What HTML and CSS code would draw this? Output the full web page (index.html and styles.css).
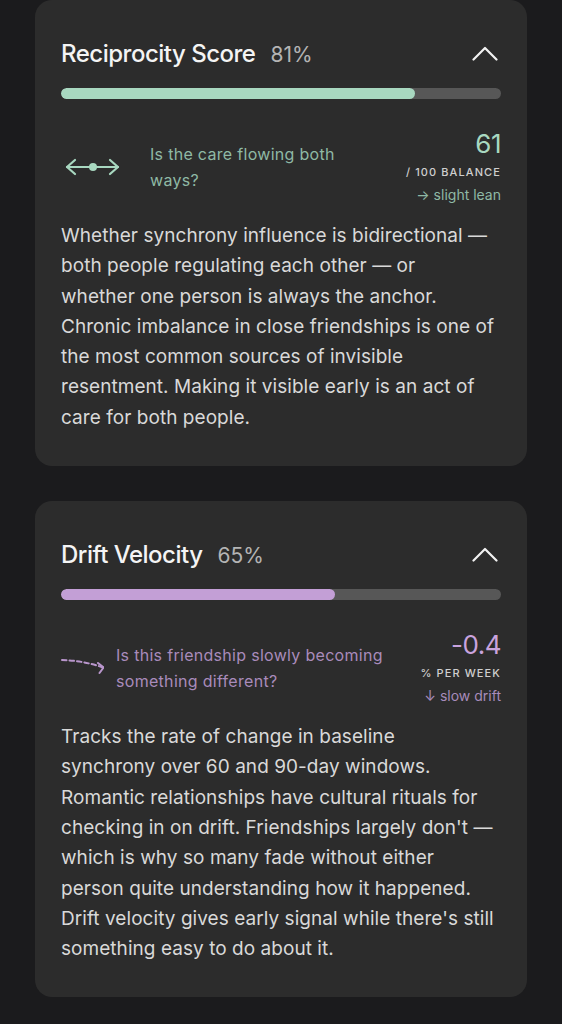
FILE: index.html
```html
<!DOCTYPE html>
<html lang="en">
<head>
<meta charset="utf-8">
<title>Metrics</title>
<link rel="stylesheet" href="styles.css">
</head>
<body>
<main class="stack">
  <section class="card card-mint">
    <header class="card-head">
      <div class="head-title">
        <h2 class="title">Reciprocity Score</h2>
        <span class="pct">81%</span>
      </div>
      <svg class="chevron" width="26" height="15" viewBox="0 0 26 15"><path d="M1.5 13.5 L13 2 L24.5 13.5" fill="none" stroke="#f2f2f2" stroke-width="2.2" stroke-linecap="round" stroke-linejoin="round"/></svg>
    </header>
    <div class="bar"><div class="fill" style="width:80.5%"></div></div>
    <div class="row">
      <div class="q">
        <svg class="icon icon-a" width="77" height="20" viewBox="0 0 77 20">
          <g fill="none" stroke="#a8d8c0" stroke-width="2.2" stroke-linecap="round" stroke-linejoin="round">
            <path d="M6 10 H57"/>
            <path d="M14 3 L6 10 L14 17"/>
            <path d="M49 3 L57 10 L49 17"/>
          </g>
          <circle cx="32" cy="10" r="4" fill="#a8d8c0"/>
        </svg>
        <p class="q-text">Is the care flowing both<br>ways?</p>
      </div>
      <div class="val">
        <div class="num">61</div>
        <div class="unit">/ 100 BALANCE</div>
        <div class="note">→ slight lean</div>
      </div>
    </div>
    <p class="body">Whether synchrony influence is bidirectional —<br>both people regulating each other — or<br>whether one person is always the anchor.<br>Chronic imbalance in close friendships is one of<br>the most common sources of invisible<br>resentment. Making it visible early is an act of<br>care for both people.</p>
  </section>

  <section class="card card-purple">
    <header class="card-head">
      <div class="head-title">
        <h2 class="title">Drift Velocity</h2>
        <span class="pct">65%</span>
      </div>
      <svg class="chevron" width="26" height="15" viewBox="0 0 26 15"><path d="M1.5 13.5 L13 2 L24.5 13.5" fill="none" stroke="#f2f2f2" stroke-width="2.2" stroke-linecap="round" stroke-linejoin="round"/></svg>
    </header>
    <div class="bar"><div class="fill" style="width:62.3%"></div></div>
    <div class="row">
      <div class="q">
        <svg class="icon icon-b" width="43" height="20" viewBox="0 0 43 20">
          <g fill="none" stroke="#b996cc" stroke-width="2" stroke-linecap="round" stroke-linejoin="round">
            <path d="M1 4 Q 22 4.5 42 11.5" stroke-dasharray="4.5 3"/>
            <path d="M37 7 L42.5 11.5 L38.5 17"/>
          </g>
        </svg>
        <p class="q-text">Is this friendship slowly becoming<br>something different?</p>
      </div>
      <div class="val">
        <div class="num">-0.4</div>
        <div class="unit">% PER WEEK</div>
        <div class="note">↓ slow drift</div>
      </div>
    </div>
    <p class="body">Tracks the rate of change in baseline<br>synchrony over 60 and 90-day windows.<br>Romantic relationships have cultural rituals for<br>checking in on drift. Friendships largely don't —<br>which is why so many fade without either<br>person quite understanding how it happened.<br>Drift velocity gives early signal while there's still<br>something easy to do about it.</p>
  </section>
</main>
</body>
</html>
```

FILE: styles.css
```css
* { box-sizing: border-box; }
html, body {
  margin: 0;
  padding: 0;
  background: #1b1b1d;
}
body {
  font-family: Inter, "Noto Sans", "DejaVu Sans", sans-serif;
  color: #e6e6e6;
}
.stack {
  display: flex;
  flex-direction: column;
  gap: 35px;
  padding: 0 35px 40px;
}
.card {
  background: #2c2c2c;
  border-radius: 17px;
  padding: 38px 26px 33px;
}
.card-head {
  display: flex;
  align-items: center;
  justify-content: space-between;
  height: 31px;
}
.head-title {
  display: flex;
  align-items: baseline;
  gap: 15px;
}
.title {
  margin: 0;
  font-size: 24px;
  font-weight: 500;
  letter-spacing: -0.5px;
  color: #f4f4f4;
  line-height: 31px;
}
.pct {
  font-size: 21px;
  font-weight: 400;
  color: #b4b4b4;
}
.chevron {
  display: block;
  margin-right: 3px;
}
.bar {
  margin-top: 19px;
  height: 11px;
  border-radius: 6px;
  background: #575757;
  overflow: hidden;
}
.fill {
  height: 100%;
  border-radius: 6px;
}
.card-mint .fill { background: #a8d8c0; }
.card-purple .fill { background: #c39fd6; }

.row {
  margin-top: 30px;
  display: flex;
  align-items: center;
  justify-content: space-between;
}
.q {
  display: flex;
  align-items: center;
  gap: 12px;
}
.icon { display: block; flex: none; }
.icon-b { margin-top: -4px; }
.q-text {
  margin: 0;
  font-size: 16px;
  line-height: 26px;
  letter-spacing: 0.3px;
}
.card-mint .q-text { color: #8fb9a5; }
.card-purple .q-text { color: #a98bbb; }

.val {
  text-align: right;
  display: flex;
  flex-direction: column;
  align-items: flex-end;
}
.num {
  font-size: 26px;
  line-height: 29px;
  font-weight: 400;
  letter-spacing: -0.5px;
}
.card-mint .num { color: #a8d8c0; }
.card-purple .num { color: #c9a3de; }
.unit {
  margin-top: 6px;
  font-size: 11px;
  line-height: 16px;
  font-weight: 500;
  letter-spacing: 1.1px;
  color: #cfcfcf;
}
.note {
  margin-top: 5px;
  font-size: 14px;
  line-height: 20px;
}
.card-mint .note { color: #8fb9a5; }
.card-purple .note { color: #a78bbb; }

.body {
  margin: 16px -4px 0 0;
  font-size: 19px;
  line-height: 30.3px;
  letter-spacing: 0.05px;
  color: #d9d9d9;
}
```
